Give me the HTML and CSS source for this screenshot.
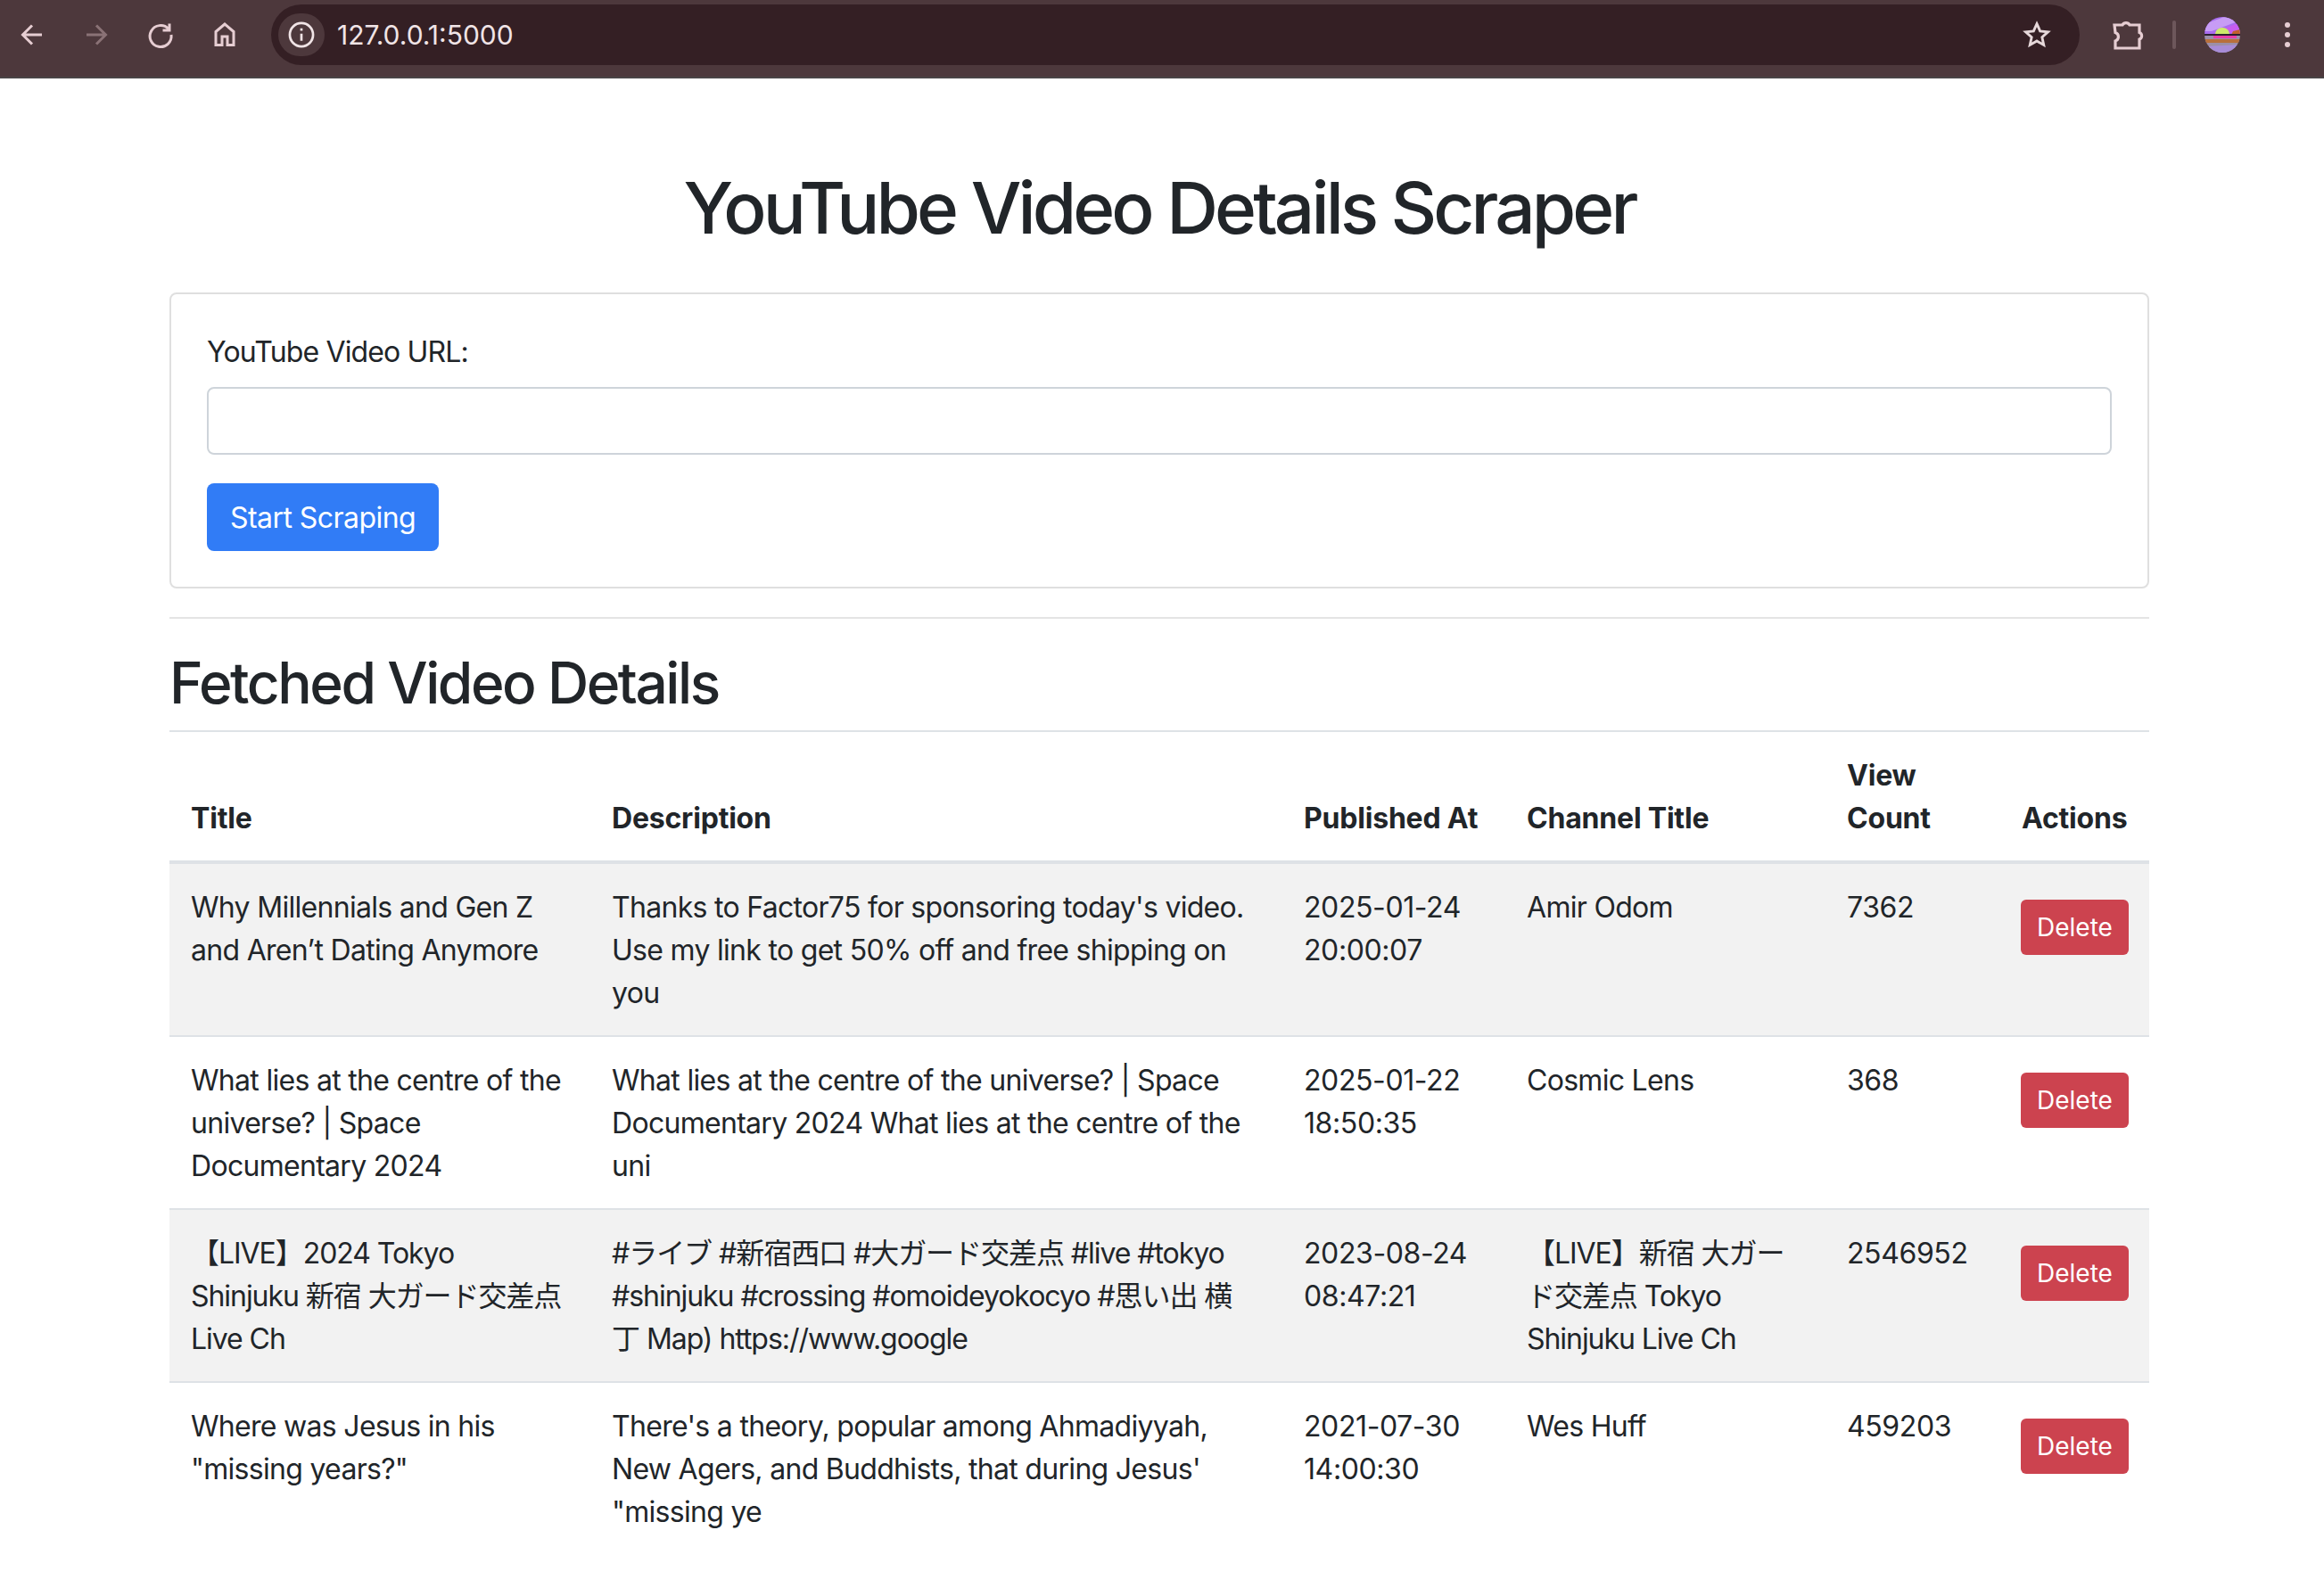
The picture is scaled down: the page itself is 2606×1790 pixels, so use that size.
FILE: index.html
```html
<!DOCTYPE html>
<html>

<head>
    <title>YouTube Video Details Scraper</title>
    <link rel="stylesheet" href="styles.css">
</head>

<body>
    <div class="toolbar">
        <svg class="tool-icon" viewBox="0 0 40 40"><path d="M31 20H10M20 9.500 9.500 20 20 30.500" /></svg>
        <svg class="tool-icon dim" viewBox="0 0 40 40"><path d="M9 20h21M20 9.500 30.500 20 20 30.500" /></svg>
        <svg class="tool-icon" viewBox="0 0 40 40"><path d="M29 13.500A12 12 0 1 0 32 20M30 7.500v7.500h-7.500" /></svg>
        <svg class="tool-icon" viewBox="0 0 40 40"><path d="M10 31.500V16.500L20 8l10 8.500v15h-7v-9.500h-6v9.500z" /></svg>
        <div class="omnibox">
            <span class="site-info">
                <svg class="info-icon" viewBox="0 0 40 40"><circle cx="20" cy="20" r="14.500" /><path d="M20 18.500v9M20 12v3" /></svg>
            </span>
            <span class="url">127.0.0.1:5000</span>
            <svg class="star-icon" viewBox="0 0 40 40"><path d="M20 5.500l4.300 9.600 10.400 1.100-7.800 7 2.200 10.300-9.100-5.300-9.100 5.300 2.200-10.300-7.800-7 10.400-1.100z" /></svg>
        </div>
        <svg class="puzzle-icon" viewBox="0 0 40 40"><path d="M5 9h9a4.500 4.500 0 0 1 8 0h11v8.500a4 4 0 0 1 0 7.500v10H6v-8a5 5 0 0 0 0-9.500z" /></svg>
        <span class="tool-sep"></span>
        <svg class="avatar" viewBox="0 0 40 40">
            <defs><clipPath id="round"><circle cx="20" cy="20" r="20" /></clipPath></defs>
            <g clip-path="url(#round)">
                <rect width="40" height="20" fill="#a86cf0" />
                <path d="M0 8 22 0h18v4L8 16H0z" fill="#c79cf5" />
                <path d="M10 18 40 6v12z" fill="#c85cf0" />
                <path d="M30 20h10v-6l-8 2z" fill="#c0602c" />
                <path d="M12 19a8 7 0 0 1 16 0z" fill="#cdea6a" />
                <rect y="19" width="40" height="2" fill="#2b2030" />
                <rect y="21" width="40" height="19" fill="#9c8fa8" />
                <rect x="10" y="21" width="26" height="3" fill="#e83ea8" />
                <rect y="25" width="40" height="4" fill="#b8703c" />
                <path d="M0 33 40 31v9H0z" fill="#a88cd8" />
            </g>
        </svg>
        <svg class="menu-icon" viewBox="0 0 12 40"><circle cx="6" cy="9" r="3" /><circle cx="6" cy="20" r="3" /><circle cx="6" cy="31" r="3" /></svg>
    </div>

    <div class="container">
        <h1>YouTube Video Details Scraper</h1>

        <form class="card">
            <div class="form-group">
                <label for="video-url">YouTube Video URL:</label>
                <input type="text" id="video-url" class="form-control">
            </div>
            <button type="button" class="btn btn-primary">Start Scraping</button>
        </form>

        <hr>

        <h2>Fetched Video Details</h2>

        <table class="table">
            <colgroup>
                <col class="col-title">
                <col class="col-desc">
                <col class="col-date">
                <col class="col-channel">
                <col class="col-views">
                <col class="col-actions">
            </colgroup>
            <thead>
                <tr>
                    <th>Title</th>
                    <th>Description</th>
                    <th>Published At</th>
                    <th>Channel Title</th>
                    <th>View Count</th>
                    <th>Actions</th>
                </tr>
            </thead>
            <tbody>
                <tr>
                    <td>Why Millennials and Gen Z and Aren’t Dating Anymore</td>
                    <td>Thanks to Factor75 for sponsoring today's video. Use my link to get 50% off and free shipping on you</td>
                    <td class="num">2025-01-24 20:00:07</td>
                    <td>Amir Odom</td>
                    <td class="num">7362</td>
                    <td><button type="button" class="btn btn-danger">Delete</button></td>
                </tr>
                <tr>
                    <td>What lies at the centre of the universe? | Space Documentary 2024</td>
                    <td>What lies at the centre of the universe? | Space Documentary 2024 What lies at the centre of the uni</td>
                    <td class="num">2025-01-22 18:50:35</td>
                    <td>Cosmic Lens</td>
                    <td class="num">368</td>
                    <td><button type="button" class="btn btn-danger">Delete</button></td>
                </tr>
                <tr>
                    <td class="cjk">【LIVE】2024 Tokyo<br>Shinjuku 新宿 大ガード交差点<br>Live Ch</td>
                    <td class="cjk">#ライブ #新宿西口 #大ガード交差点 #live #tokyo<br>#shinjuku #crossing #omoideyokocyo #思い出 横<br>丁 Map) https://www.google</td>
                    <td class="num">2023-08-24 08:47:21</td>
                    <td class="cjk">【LIVE】新宿 大ガード交差点 Tokyo Shinjuku Live Ch</td>
                    <td class="num">2546952</td>
                    <td><button type="button" class="btn btn-danger">Delete</button></td>
                </tr>
                <tr>
                    <td>Where was Jesus in his "missing years?"</td>
                    <td>There's a theory, popular among Ahmadiyyah, New Agers, and Buddhists, that during Jesus' "missing ye</td>
                    <td class="num">2021-07-30 14:00:30</td>
                    <td>Wes Huff</td>
                    <td class="num">459203</td>
                    <td><button type="button" class="btn btn-danger">Delete</button></td>
                </tr>
            </tbody>
        </table>
    </div>
</body>

</html>
```

FILE: styles.css
```css
* {
    box-sizing: border-box;
}

body {
    margin: 0;
    background: #fff;
    color: #212529;
    font-family: Inter, "Noto Sans CJK JP", sans-serif;
    font-size: 32px;
    line-height: 48px;
    letter-spacing: -0.7px;
}

/* browser chrome */
.toolbar {
    display: flex;
    align-items: center;
    height: 88px;
    padding: 0 0 8px 16px;
    background: #4d383c;
    border-bottom: 2px solid #4a4446;
}

.tool-icon {
    width: 40px;
    height: 40px;
    margin-right: 32px;
    fill: none;
    stroke: #e6cdd2;
    stroke-width: 3;
}

.tool-icon.dim {
    stroke: #8a7276;
}

.omnibox {
    display: flex;
    align-items: center;
    width: 2028px;
    height: 68px;
    padding-left: 8px;
    border-radius: 34px;
    background: #341f24;
}

.site-info {
    display: flex;
    align-items: center;
    justify-content: center;
    width: 52px;
    height: 48px;
    border-radius: 24px;
    background: #4d383c;
}

.info-icon {
    width: 36px;
    height: 36px;
    fill: none;
    stroke: #f0e4e6;
    stroke-width: 3;
}

.url {
    margin-left: 14px;
    color: #f0e4e6;
    font-size: 30px;
    letter-spacing: 0;
}

.star-icon {
    width: 34px;
    height: 34px;
    margin-left: auto;
    margin-right: 31px;
    fill: none;
    stroke: #e6d8da;
    stroke-width: 3.400;
}

.puzzle-icon {
    width: 40px;
    height: 40px;
    margin-left: 34px;
    fill: none;
    stroke: #e6cdd2;
    stroke-width: 3.200;
}

.tool-sep {
    width: 4px;
    height: 32px;
    margin-left: 30px;
    border-radius: 2px;
    background: #6d575b;
}

.avatar {
    width: 40px;
    height: 40px;
    margin-left: 32px;
}

.menu-icon {
    width: 12px;
    height: 40px;
    margin-left: 47px;
    fill: #e6cdd2;
}

/* page */
.container {
    width: 2220px;
    margin: 96px 196px 0 190px;
}

h1 {
    margin: 0 0 48px;
    font-size: 80px;
    font-weight: 500;
    line-height: 96px;
    letter-spacing: -3.900px;
    text-align: center;
    padding-top: 1px;
    height: 96px;
}

h2 {
    margin: 0 0 16px;
    padding-top: 2px;
    height: 76.800px;
    font-size: 64px;
    font-weight: 500;
    line-height: 76.800px;
    letter-spacing: -2.450px;
}

hr {
    height: 2px;
    margin: 32px 0;
    border: 0;
    background: #e4e4e4;
}

.card {
    padding: 40px;
    border: 2px solid #dfdfdf;
    border-radius: 8px;
}

.form-group {
    margin-bottom: 32px;
}

label {
    display: block;
    margin-bottom: 16px;
    padding-top: 1px;
    height: 48px;
    letter-spacing: -0.850px;
}

.form-control {
    display: block;
    width: 100%;
    height: 76px;
    border: 2px solid #ced4da;
    border-radius: 8px;
    background: #fff;
}

.btn {
    border: 2px solid transparent;
    color: #fff;
    font-family: inherit;
}

.btn-primary {
    height: 76px;
    padding: 0 24px;
    border-radius: 8px;
    background: #317cf6;
    font-size: 32px;
    letter-spacing: -0.550px;
}

.btn-danger {
    height: 62px;
    margin: 15px 0 0 -1px;
    padding: 0 16px;
    border-radius: 6px;
    background: #cc434f;
    font-size: 28px;
    letter-spacing: 0;
}

.table {
    width: 100%;
    border-collapse: collapse;
    table-layout: fixed;
}

.col-title { width: 472px; }
.col-desc { width: 776px; }
.col-date { width: 250px; }
.col-channel { width: 359px; }
.col-views { width: 196px; }
.col-actions { width: 167px; }

th,
td {
    padding: 25px 24px 23px;
    border-top: 2px solid #dee2e6;
    text-align: left;
    vertical-align: top;
}

th {
    border-bottom: 4px solid #dee2e6;
    font-weight: 700;
    letter-spacing: -0.200px;
    vertical-align: bottom;
}

td.num {
    letter-spacing: -0.400px;
}

td.cjk {
    letter-spacing: -1.050px;
}

tbody tr:nth-child(odd) {
    background: #f2f2f2;
}
```
